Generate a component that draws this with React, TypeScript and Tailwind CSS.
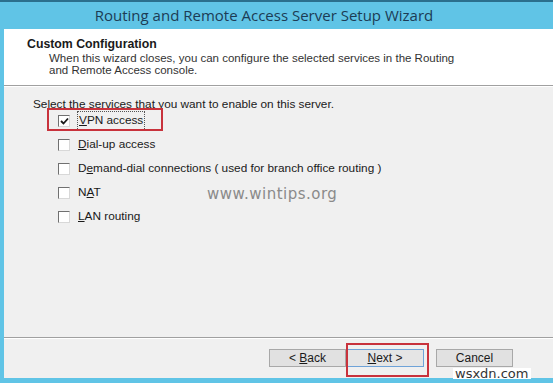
import React from "react";

const options = [
    { key: "V", rest: "PN access", checked: true },
    { key: "D", rest: "ial-up access", checked: false },
    { pre: "D", key: "e", rest: "mand-dial connections ( used for branch office routing )", checked: false },
    { pre: "N", key: "A", rest: "T", checked: false },
    { key: "L", rest: "AN routing", checked: false },
];

const Checkbox = ({ checked }: { checked: boolean }) => (
    <span className="w-[12px] h-[12px] bg-white border border-t-[#707070] border-l-[#707070] border-r-[#d8d8d8] border-b-[#d8d8d8] flex items-center justify-center">
        {checked && (
            <svg width="9" height="8" viewBox="0 0 9 8">
                <path d="M1 4l2.5 2.5L8 1.5" fill="none" stroke="#1a1a1a" strokeWidth="1.8" />
            </svg>
        )}
    </span>
);

const Button = ({ children, focused, className = "" }: { children: React.ReactNode; focused?: boolean; className?: string }) => (
    <button
        className={
            (focused
                ? "w-[78px] h-[18px] bg-[#e5e5e5] border border-[#6fa3d8] text-[12px] leading-[16px] text-[#1a1a1a] "
                : "w-[77px] h-[18px] bg-[#e1e1e1] border border-[#a8a8a8] text-[12px] leading-[16px] text-[#1a1a1a] ") + className
        }
    >
        {children}
    </button>
);

export default function App() {
    return (
        <div
            className="w-[553px] h-[383px] bg-[#60c4e6] flex flex-col overflow-hidden"
            style={{ fontFamily: '"Liberation Sans", Arial, sans-serif' }}
        >
            <div className="h-[2px] bg-[#2b6f8d]" />
            {/* Title bar */}
            <div
                className="h-[27px] flex items-center justify-center pr-[25px] text-[15px] text-[#1c3c55]"
                style={{ fontFamily: '"Open Sans", sans-serif' }}
            >
                Routing and Remote Access Server Setup Wizard
            </div>

            <div className="flex-1 ml-[4px] flex flex-col bg-[#f0f0f0]">
                {/* Header */}
                <div className="h-[56px] bg-white pl-[23px] pt-[8px] text-[#1a1a1a]">
                    <div className="font-bold text-[12.3px] leading-[14px]">Custom Configuration</div>
                    <div className="pl-[22px] text-[11.5px] leading-[12px] text-[#333] mt-[1px]">
                        When this wizard closes, you can configure the selected services in the Routing
                        <br />
                        and Remote Access console.
                    </div>
                </div>
                <div className="h-[1px] bg-[#a0a0a0]" />
                <div className="h-[1px] bg-white" />

                {/* Body */}
                <div className="flex-1 relative pl-[29px] pt-[10px] text-[11.8px] text-[#1a1a1a]">
                    <div className="leading-[14px]">Select the services that you want to enable on this server.</div>
                    <div className="flex flex-col gap-[10px] mt-[3px] pl-[25px]">
                        {options.map((o, i) => (
                            <div key={i} className="flex items-center gap-[8px] h-[14px]">
                                <Checkbox checked={o.checked} />
                                <span className={o.checked ? "outline outline-1 outline-dotted outline-[#555] px-[1px]" : ""}>
                                    {o.pre}
                                    <u>{o.key}</u>
                                    {o.rest}
                                </span>
                            </div>
                        ))}
                    </div>
                    <div
                        className="absolute left-[203px] top-[96px] text-[15px] text-[#8a8a8a] tracking-[0.5px]"
                        style={{ fontFamily: '"DejaVu Sans", sans-serif' }}
                    >
                        www.wintips.org
                    </div>
                    <div className="absolute left-[43px] top-[21px] w-[116px] h-[23px] border-2 border-[#c8323c]" />
                </div>

                <div className="h-[1px] bg-[#a0a0a0]" />
                <div className="h-[1px] bg-white" />

                {/* Footer */}
                <div className="h-[39px] relative flex items-start pt-[10px] pl-[265px]">
                    <Button>
                        &lt; <u>B</u>ack
                    </Button>
                    <Button focused>
                        <u>N</u>ext &gt;
                    </Button>
                    <Button className="ml-[12px]">Cancel</Button>
                    <div className="absolute left-[342px] top-[4px] w-[83px] h-[34px] border-2 border-[#c8323c]" />
                    <div
                        className="absolute left-[449px] top-[29px] h-[11px] bg-white px-[2px] text-[13px] leading-[11px] text-[#333]"
                        style={{ fontFamily: '"DejaVu Sans", sans-serif' }}
                    >
                        wsxdn.com
                    </div>
                </div>
            </div>
            <div className="h-[5px] bg-[#60c4e6]" />
        </div>
    );
}
